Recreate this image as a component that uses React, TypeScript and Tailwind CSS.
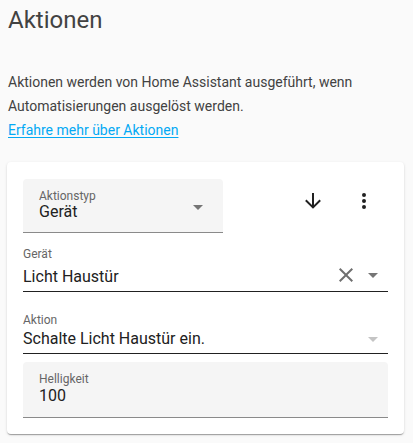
const CaretDown = ({ className }: { className: string }) => (
  <svg viewBox="0 0 24 24" className={className} fill="currentColor">
    <path d="M7,10L12,15L17,10H7Z" />
  </svg>
);

const App = () => {
  return (
    <div
      className="w-[413px] h-[443px] bg-[#fafafa] overflow-hidden"
      style={{ fontFamily: "Roboto, 'Noto Sans', sans-serif" }}
    >
      <h1 className="pt-[4px] pl-[8px] text-[24px] leading-[32px] font-normal text-[#424242]">
        Aktionen
      </h1>

      <div className="mt-[34px] pl-[8px] text-[14px] leading-[24px] text-[#424242]">
        <p>
          Aktionen werden von Home Assistant ausgeführt, wenn
          Automatisierungen ausgelöst werden.
        </p>
        <a href="#" className="block text-[#03a9f4] underline underline-offset-[2px]">
          Erfahre mehr über Aktionen
        </a>
      </div>

      <div className="mt-[20px] ml-[7px] w-[397px] bg-white rounded-[4px] px-[16px] pt-[17px] pb-[16px] shadow-[0px_2px_1px_-1px_rgba(0,0,0,0.2),0px_1px_1px_0px_rgba(0,0,0,0.14),0px_1px_3px_0px_rgba(0,0,0,0.12)]">
        {/* top row */}
        <div className="flex items-start">
          <div className="relative w-[200px] h-[54px] bg-[#f5f5f5] rounded-t-[4px] border-b border-[#8a8a8a] pl-[16px] pt-[9px]">
            <div className="text-[12px] leading-[16px] text-[#666]">Aktionstyp</div>
            <div className="text-[16px] leading-[16px] text-[#212121]">Gerät</div>
            <CaretDown className="absolute right-[13px] top-[16px] w-[24px] h-[24px] text-[#757575]" />
          </div>
          <div className="flex-1" />
          <button className="mt-[10px] mr-[27px] w-[24px] h-[24px] text-[#212121]">
            <svg viewBox="0 0 24 24" className="w-[24px] h-[24px]" fill="currentColor">
              <path d="M11,4H13V16L18.5,10.5L19.92,11.92L12,19.84L4.08,11.92L5.5,10.5L11,16V4Z" />
            </svg>
          </button>
          <button className="mt-[10px] mr-[12px] w-[24px] h-[24px] text-[#212121]">
            <svg viewBox="0 0 24 24" className="w-[24px] h-[24px]" fill="currentColor">
              <path d="M12,16A2,2 0 0,1 14,18A2,2 0 0,1 12,20A2,2 0 0,1 10,18A2,2 0 0,1 12,16M12,10A2,2 0 0,1 14,12A2,2 0 0,1 12,14A2,2 0 0,1 10,12A2,2 0 0,1 12,10M12,4A2,2 0 0,1 14,6A2,2 0 0,1 12,8A2,2 0 0,1 10,6A2,2 0 0,1 12,4Z" />
            </svg>
          </button>
        </div>

        {/* Gerät */}
        <div className="relative pt-[13px] pb-[6px] border-b border-[#212121]">
          <div className="text-[12px] leading-[16px] text-[#666]">Gerät</div>
          <div className="mt-[7px] text-[16px] leading-[16px] text-[#212121]">Licht Haustür</div>
          <div className="absolute right-[3px] bottom-[4px] flex items-center">
            <svg viewBox="0 0 24 24" className="w-[24px] h-[24px] text-[#6f6f6f]" fill="currentColor">
              <path d="M19,6.41L17.59,5L12,10.59L6.41,5L5,6.41L10.59,12L5,17.59L6.41,19L12,13.41L17.59,19L19,17.59L13.41,12L19,6.41Z" />
            </svg>
            <CaretDown className="ml-[3px] w-[24px] h-[24px] text-[#757575]" />
          </div>
        </div>

        {/* Aktion */}
        <div className="relative pt-[20px] pb-[6px] border-b border-[#212121]">
          <div className="text-[12px] leading-[16px] text-[#666]">Aktion</div>
          <div className="mt-[3px] text-[16px] leading-[16px] text-[#212121]">Schalte Licht Haustür ein.</div>
          <CaretDown className="absolute right-[3px] bottom-[2px] w-[24px] h-[24px] text-[#c4c4c4]" />
        </div>

        {/* Helligkeit */}
        <div className="mt-[8px] h-[56px] bg-[#f5f5f5] rounded-t-[4px] border-b border-[#8a8a8a] pl-[16px] pt-[9px]">
          <div className="text-[12px] leading-[16px] text-[#666]">Helligkeit</div>
          <div className="mt-[1px] text-[16px] leading-[16px] text-[#212121]">100</div>
        </div>
      </div>
    </div>
  );
};

export default App;
